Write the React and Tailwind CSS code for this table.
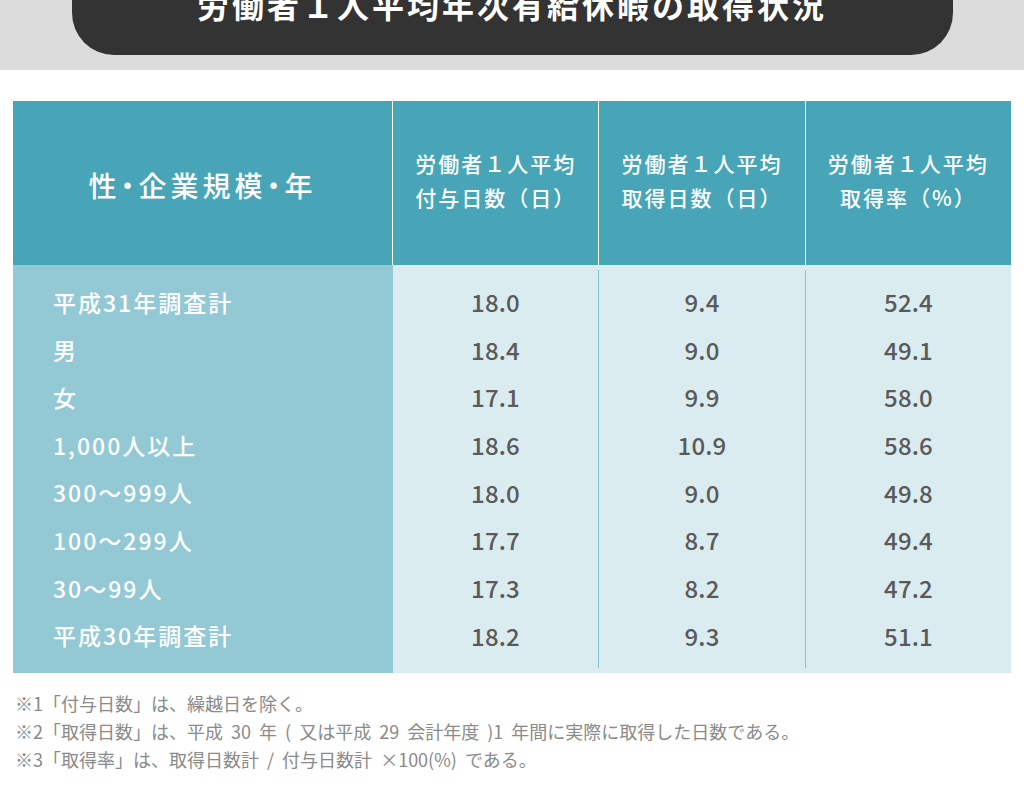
const rows = [
  ['平成31年調査計', '18.0', '9.4', '52.4'],
  ['男', '18.4', '9.0', '49.1'],
  ['女', '17.1', '9.9', '58.0'],
  ['1,000人以上', '18.6', '10.9', '58.6'],
  ['300～999人', '18.0', '9.0', '49.8'],
  ['100～299人', '17.7', '8.7', '49.4'],
  ['30～99人', '17.3', '8.2', '47.2'],
  ['平成30年調査計', '18.2', '9.3', '51.1'],
]

const heads = [
  ['労働者１人平均', '付与日数（日）'],
  ['労働者１人平均', '取得日数（日）'],
  ['労働者１人平均', '取得率（%）'],
]

const NumCol = ({ idx, border }) => (
  <div className="flex flex-col py-[5px]">
    <div className={`flex flex-col py-[8px] ${border ? 'border-l border-[#86c2cf]' : ''}`}>
      {rows.map((r) => (
        <div key={r[0]} className="h-[47.7px] flex items-center justify-center text-[24px] font-medium text-[#5a5a5a] tracking-[0.2px]">
          {r[idx]}
        </div>
      ))}
    </div>
  </div>
)

const App = () => {
  return (
    <div className="w-[1024px] h-[786px] bg-white overflow-hidden font-['Noto_Sans_CJK_JP','Noto_Sans',sans-serif]">
      {/* title band */}
      <div className="h-[70px] bg-[#dcdcdc] flex justify-center">
        <div className="w-[881px] h-[55px] bg-[#333333] rounded-b-[42px] overflow-hidden flex items-end justify-center">
          <h1 className="mb-[35px] text-white text-[32px] font-bold leading-none tracking-[3px] whitespace-nowrap">
            労働者１人平均年次有給休暇の取得状況
          </h1>
        </div>
      </div>

      {/* table */}
      <div className="mt-[31px] mx-[13px] w-[998px]">
        <div className="flex h-[164px] bg-white gap-px">
          <div className="w-[379px] bg-[#47a5b7] flex items-center justify-center text-white text-[28px] font-medium tracking-[4px] [font-feature-settings:'palt'] pt-[4px]">
            性・企業規模・年
          </div>
          {heads.map((h, i) => (
            <div key={i} className={`${i === 1 ? 'w-[207px]' : 'w-[205px]'} flex-1 bg-[#47a5b7] flex flex-col items-center pt-[45px] text-white text-[21px] font-medium leading-[34px] tracking-[2px]`}>
              <span>{h[0]}</span>
              <span>{h[1]}</span>
            </div>
          ))}
        </div>

        <div className="flex">
          <div className="w-[380px] bg-[#93c9d5] py-[13px]">
            {rows.map((r) => (
              <div key={r[0]} className="h-[47.7px] flex items-center pl-[40px] text-white text-[23px] font-medium tracking-[2px]">
                {r[0]}
              </div>
            ))}
          </div>
          <div className="flex-1 bg-[#dbecf1] grid grid-cols-[205px_207px_1fr]">
            <NumCol idx={1} />
            <NumCol idx={2} border />
            <NumCol idx={3} border />
          </div>
        </div>
      </div>

      {/* notes */}
      <div className="mt-[16px] pl-[15px] text-[18px] leading-[28px] text-[#8a8a8a] [word-spacing:4px]">
        <p>※1「付与日数」は、繰越日を除く。</p>
        <p>※2「取得日数」は、平成 30 年 ( 又は平成 29 会計年度 )1 年間に実際に取得した日数である。</p>
        <p>※3「取得率」は、取得日数計 / 付与日数計 ×100(%) である。</p>
      </div>
    </div>
  )
}

export default App
